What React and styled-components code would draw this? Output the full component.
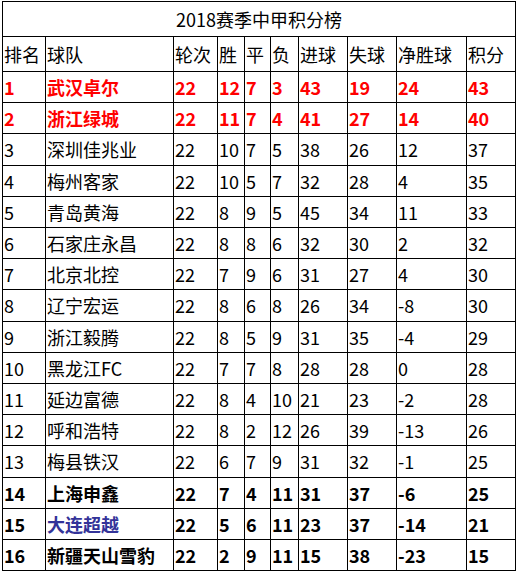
import React from "react";
import styled, { createGlobalStyle } from "styled-components";

const GlobalStyle = createGlobalStyle`
  body {
    margin: 0;
    background: #fff;
  }
`;

const Sheet = styled.div`
  padding: 1px 0 0 2px;
  font-family: "Noto Sans CJK SC", "Microsoft YaHei", sans-serif;
`;

const Table = styled.table`
  border-collapse: collapse;
  table-layout: fixed;
  width: 514px;
  color: #000;
  font-size: 18px;
`;

const TitleCell = styled.td`
  padding: 1px 0 0;
  border: 1px solid #000;
  text-align: center;
  line-height: 33px;
`;

const HeadCell = styled.td`
  padding: 1px 0 0 1px;
  border: 1px solid #000;
  white-space: nowrap;
  line-height: 33px;
`;

const Cell = styled.td`
  padding: 1px 0 0 1px;
  border: 1px solid #000;
  white-space: nowrap;
  overflow: hidden;
  line-height: 29.2px;
  font-weight: ${(p) => (p.$bold ? 700 : 400)};
  color: ${(p) => p.$color || "#000"};
`;

const widths = [43, 128, 44, 27, 26, 28, 49, 49, 70, 49];
const headers = ["排名", "球队", "轮次", "胜", "平", "负", "进球", "失球", "净胜球", "积分"];

const rows = [
  ["1", "武汉卓尔", 22, 12, 7, 3, 43, 19, 24, 43],
  ["2", "浙江绿城", 22, 11, 7, 4, 41, 27, 14, 40],
  ["3", "深圳佳兆业", 22, 10, 7, 5, 38, 26, 12, 37],
  ["4", "梅州客家", 22, 10, 5, 7, 32, 28, 4, 35],
  ["5", "青岛黄海", 22, 8, 9, 5, 45, 34, 11, 33],
  ["6", "石家庄永昌", 22, 8, 8, 6, 32, 30, 2, 32],
  ["7", "北京北控", 22, 7, 9, 6, 31, 27, 4, 30],
  ["8", "辽宁宏运", 22, 8, 6, 8, 26, 34, -8, 30],
  ["9", "浙江毅腾", 22, 8, 5, 9, 31, 35, -4, 29],
  ["10", "黑龙江FC", 22, 7, 7, 8, 28, 28, 0, 28],
  ["11", "延边富德", 22, 8, 4, 10, 21, 23, -2, 28],
  ["12", "呼和浩特", 22, 8, 2, 12, 26, 39, -13, 26],
  ["13", "梅县铁汉", 22, 6, 7, 9, 31, 32, -1, 25],
  ["14", "上海申鑫", 22, 7, 4, 11, 31, 37, -6, 25],
  ["15", "大连超越", 22, 5, 6, 11, 23, 37, -14, 21],
  ["16", "新疆天山雪豹", 22, 2, 9, 11, 15, 38, -23, 15],
];

const RED = "#ff0000";
const BLUE = "#333399";

const rowStyle = (i) => {
  if (i < 2) return { bold: true, color: RED };
  if (i >= 13) return { bold: true, color: null };
  return { bold: false, color: null };
};

export default function App() {
  return (
    <Sheet>
      <GlobalStyle />
      <Table>
        <colgroup>
          {widths.map((w, i) => (
            <col key={i} style={{ width: w }} />
          ))}
        </colgroup>
        <tbody>
          <tr>
            <TitleCell colSpan={10}>2018赛季中甲积分榜</TitleCell>
          </tr>
          <tr>
            {headers.map((h) => (
              <HeadCell key={h}>{h}</HeadCell>
            ))}
          </tr>
          {rows.map((r, i) => {
            const s = rowStyle(i);
            return (
              <tr key={r[0]}>
                {r.map((v, j) => (
                  <Cell
                    key={j}
                    $bold={s.bold}
                    $color={i === 14 && j === 1 ? BLUE : s.color}
                  >
                    {v}
                  </Cell>
                ))}
              </tr>
            );
          })}
        </tbody>
      </Table>
    </Sheet>
  );
}
